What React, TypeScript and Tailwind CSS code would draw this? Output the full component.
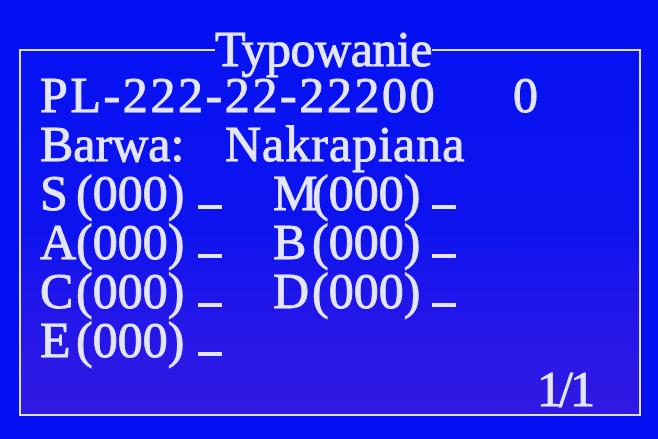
import React from "react";

const Cursor = ({ gap }: { gap: string }) => (
  <span className={`inline-block w-[24px] h-[4px] ${gap} mb-[1px] bg-[#e4e6ff] align-baseline`} />
);

const Cell = ({ label, right }: { label: string; right?: boolean }) => (
  <span className="whitespace-pre">
    <span className={right ? "inline-block w-[39px]" : "inline-block w-[36px]"}>{label}</span>
    <span>(000)</span>
    <Cursor gap={right ? "ml-[12px]" : "ml-[14px]"} />
  </span>
);

export default function App() {
  const rows: [string, string | null][] = [
    ["S", "M"],
    ["A", "B"],
    ["C", "D"],
    ["E", null],
  ];
  return (
    <div
      className="w-[658px] h-[439px] overflow-hidden bg-[#0611f3] pt-[25px] pl-[19px] text-[#e4e6ff] [-webkit-text-stroke:0.9px_#e4e6ff]"
      style={{ fontFamily: '"Liberation Serif", "Times New Roman", serif' }}
    >
      <fieldset className="w-[622px] border-2 border-[#dcdfff] bg-gradient-to-b from-[#0712f2] via-[#0d13ef] to-[#3119e2]">
        <legend className="ml-[194px] p-0 text-[50px] leading-[49px] tracking-[-0.5px]">
          Typowanie
        </legend>
        <div className="-mt-[3px] pl-[19px] text-[50px] leading-[49px]">
          <div className="flex whitespace-pre">
            <span className="w-[473px] tracking-[2.6px]">PL-222-22-22200</span>
            <span>0</span>
          </div>
          <div className="flex whitespace-pre">
            <span className="w-[185px]">Barwa:</span>
            <span className="tracking-[1px]">Nakrapiana</span>
          </div>
          {rows.map(([a, b]) => (
            <div key={a} className="grid grid-cols-[233px_auto]">
              <Cell label={a} />
              {b ? <Cell label={b} right /> : <span />}
            </div>
          ))}
          <div className="flex justify-end pr-[47px] tracking-[-3px]">1/1</div>
        </div>
      </fieldset>
    </div>
  );
}
